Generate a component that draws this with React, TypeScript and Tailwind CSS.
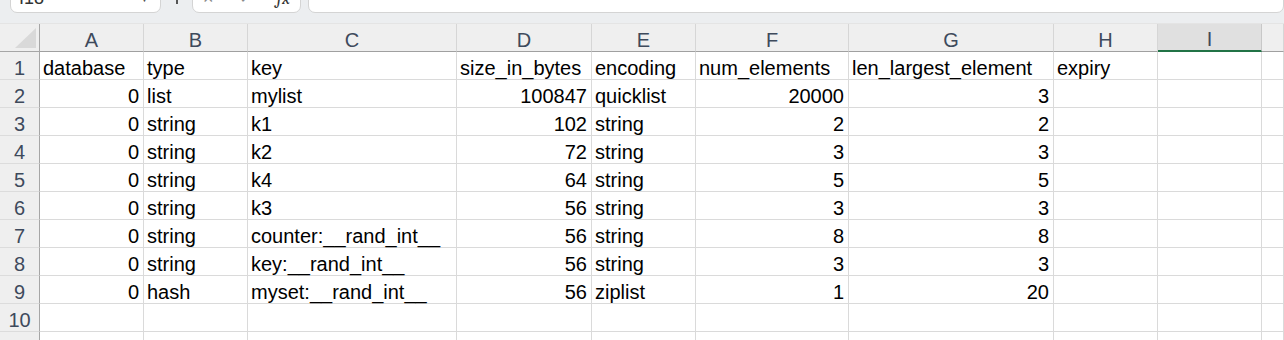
const cols = ['A', 'B', 'C', 'D', 'E', 'F', 'G', 'H', 'I', '']

const rows: (string | number)[][] = [
  ['database', 'type', 'key', 'size_in_bytes', 'encoding', 'num_elements', 'len_largest_element', 'expiry'],
  [0, 'list', 'mylist', 100847, 'quicklist', 20000, 3, ''],
  [0, 'string', 'k1', 102, 'string', 2, 2, ''],
  [0, 'string', 'k2', 72, 'string', 3, 3, ''],
  [0, 'string', 'k4', 64, 'string', 5, 5, ''],
  [0, 'string', 'k3', 56, 'string', 3, 3, ''],
  [0, 'string', 'counter:__rand_int__', 56, 'string', 8, 8, ''],
  [0, 'string', 'key:__rand_int__', 56, 'string', 3, 3, ''],
  [0, 'hash', 'myset:__rand_int__', 56, 'ziplist', 1, 20, ''],
  [],
  [],
]

const gridCols = 'grid grid-cols-[40px_104px_104px_209px_135px_104px_153px_205px_104px_104px_1fr]'

const Toolbar = () => (
  <div className="h-[24px] bg-[#eceef0] overflow-hidden flex items-start border-b border-[#e4e4e4]">
    <div className="ml-[10px] w-[151px] h-[30px] -mt-[17px] bg-white border border-[#d4d4d4] rounded-[7px] flex items-center pl-[8px] pr-[10px] justify-between">
      <span className="text-[18px] text-[#333]">I18</span>
      <span className="text-[11px] text-[#555]">▼</span>
    </div>
    <div className="w-[31px] h-[13px] flex items-start justify-center">
      <span className="w-[2px] h-[4px] bg-[#555] mt-0"></span>
    </div>
    <div className="w-[109px] h-[30px] -mt-[17px] bg-white border border-[#d4d4d4] rounded-[7px] flex items-center px-[10px] justify-between text-[#8a8a8a]">
      <span className="text-[18px]">×</span>
      <span className="text-[16px]">✓</span>
      <span className="text-[18px] italic font-serif text-[#333]">fx</span>
    </div>
    <div className="ml-[7px] flex-1 h-[30px] -mt-[17px] bg-white border border-[#d4d4d4] rounded-[7px]"></div>
  </div>
)

const Corner = () => (
  <div className="relative bg-[#efefef] border-r border-b border-[#a6a6a6] h-[28px]">
    <svg className="absolute right-[3px] bottom-[3px]" width="21" height="20" viewBox="0 0 21 20">
      <polygon points="21,0 21,20 0,20" fill="#d9d9d9" />
    </svg>
  </div>
)

export default function App() {
  return (
    <div className="w-[1284px] h-[340px] overflow-hidden bg-white" style={{ fontFamily: '"Liberation Sans", Arial, sans-serif' }}>
      <Toolbar />
      <div className={gridCols}>
        <Corner />
        {cols.map((c, i) => (
          <div
            key={i}
            className={
              c === 'I'
                ? 'h-[28px] bg-[#e0e0e0] border-r border-[#c8c8c8] border-b-2 border-b-[#217346] flex items-end justify-center text-[20px] leading-[22px] text-[#3e4a5c]'
                : 'h-[28px] bg-[#efefef] border-r border-[#d6d6d6] border-b border-b-[#a0a0a0] flex items-end justify-center text-[20px] leading-[22px] text-[#3e4a5c]'
            }
          >
            {c}
          </div>
        ))}
        {rows.map((r, ri) => (
          <Row key={ri} n={ri + 1} cells={r} />
        ))}
      </div>
    </div>
  )
}

const Row = ({ n, cells }: { n: number; cells: (string | number)[] }) => (
  <>
    <div className="h-[28px] bg-[#efefef] border-r border-[#a6a6a6] border-b border-b-[#dcdcdc] flex items-end justify-center text-[20px] leading-[22px] text-[#3e4a5c]">
      {n}
    </div>
    {cols.map((_, ci) => {
      const v = cells[ci]
      const isNum = typeof v === 'number'
      return (
        <div
          key={ci}
          className={
            'h-[28px] border-r border-b border-[#dadada] flex items-end text-[20px] leading-[22px] text-black whitespace-nowrap ' +
            (isNum ? 'justify-end pr-[4px]' : 'pl-[3px]')
          }
        >
          {v === undefined ? '' : String(v)}
        </div>
      )
    })}
  </>
)
